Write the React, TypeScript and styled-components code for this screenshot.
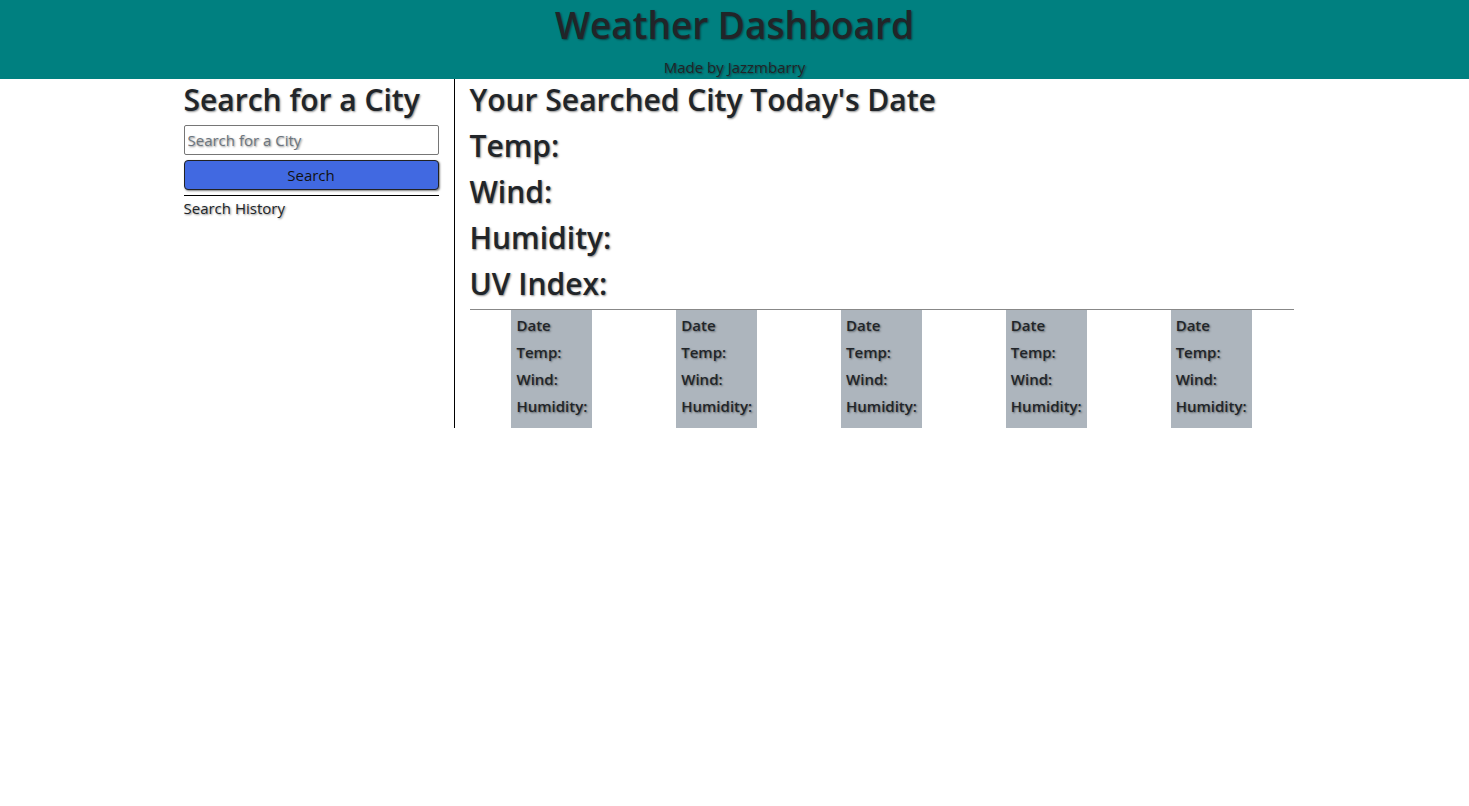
import React from "react";
import styled, { createGlobalStyle } from "styled-components";

const Global = createGlobalStyle`
  html, body { margin: 0; padding: 0; background: #fff; }
  body {
    font-family: "Open Sans", "Noto Sans", Arial, sans-serif;
    color: #212529;
    font-size: 16px;
  }
  * { box-sizing: border-box; }
`;

const FONT = `"Open Sans", "Noto Sans", Arial, sans-serif`;
const SHADOW = `1px 1px 2px rgba(0,0,0,0.45)`;

const Header = styled.header`
  background: #008080;
  height: 79px;
  display: flex;
  flex-direction: column;
  align-items: center;
  text-shadow: ${SHADOW};
`;

const Title = styled.h1`
  margin: 0;
  font-family: ${FONT};
  font-size: 37px;
  font-weight: 600;
  line-height: 50px;
  color: #212529;
`;

const Subtitle = styled.div`
  margin-top: 7px;
  font-size: 15px;
  line-height: 20px;
  color: #212529;
`;

const Container = styled.main`
  width: 1140px;
  margin: 0 auto;
  padding-left: 19px;
  display: flex;
  align-items: stretch;
`;

const Sidebar = styled.aside`
  width: 271px;
  padding: 2px 15px 0 0;
  border-right: 1px solid #000;
  text-shadow: ${SHADOW};
`;

const Heading = styled.h2<{ $gap?: number }>`
  margin: 0 0 ${(p) => (p.$gap ?? 8)}px;
  font-family: ${FONT};
  font-size: 30px;
  font-weight: 600;
  line-height: 38px;
  color: #212529;
  text-shadow: ${SHADOW};
`;

const SearchInput = styled.input`
  display: block;
  width: 255px;
  height: 30px;
  padding: 0 3px;
  margin: 0;
  border: 1px solid #767676;
  border-radius: 2px;
  font-family: ${FONT};
  font-size: 15px;
  color: #212529;
  text-shadow: ${SHADOW};
  &::placeholder { color: #6c757d; }
`;

const SearchButton = styled.button`
  display: block;
  width: 255px;
  height: 30px;
  margin-top: 5px;
  background: #4169e1;
  border: 1px solid #222;
  border-radius: 4px;
  box-shadow: 1px 1px 2px rgba(0,0,0,0.5);
  font-family: ${FONT};
  font-size: 15px;
  color: #111;
  padding: 0;
`;

const Rule = styled.hr<{ $color: string }>`
  margin: 5px 0 2px;
  border: 0;
  border-top: 1px solid ${(p) => p.$color};
  width: 100%;
  opacity: 1;
`;

const History = styled.div`
  font-size: 15px;
  line-height: 20px;
`;

const Main = styled.section`
  width: 824px;
  margin-left: 15px;
`;

const Stats = styled.div`
  padding-top: 2px;
`;

const ForecastRow = styled.div`
  display: grid;
  grid-template-columns: repeat(5, 1fr);
  border-top: 1px solid #888;
`;

const Cell = styled.div`
  display: flex;
  justify-content: center;
`;

const Card = styled.div`
  background: #adb5bd;
  padding: 2px 5px 8px;
  text-shadow: ${SHADOW};
`;

const CardLine = styled.div`
  font-family: ${FONT};
  font-size: 15px;
  font-weight: 600;
  line-height: 27px;
`;

const days = [0, 1, 2, 3, 4];

export default function App() {
  return (
    <>
      <Global />
      <Header>
        <Title>Weather Dashboard</Title>
        <Subtitle>Made by Jazzmbarry</Subtitle>
      </Header>
      <Container>
        <Sidebar>
          <Heading $gap={6}>Search for a City</Heading>
          <SearchInput placeholder="Search for a City" />
          <SearchButton>Search</SearchButton>
          <Rule $color="#000" />
          <History>Search History</History>
        </Sidebar>
        <Main>
          <Stats>
            <Heading>Your Searched City Today's Date</Heading>
            <Heading>Temp:</Heading>
            <Heading>Wind:</Heading>
            <Heading>Humidity:</Heading>
            <Heading $gap={6}>UV Index:</Heading>
          </Stats>
          <ForecastRow>
            {days.map((d) => (
              <Cell key={d}>
                <Card>
                  <CardLine>Date</CardLine>
                  <CardLine>Temp:</CardLine>
                  <CardLine>Wind:</CardLine>
                  <CardLine>Humidity:</CardLine>
                </Card>
              </Cell>
            ))}
          </ForecastRow>
        </Main>
      </Container>
    </>
  );
}
